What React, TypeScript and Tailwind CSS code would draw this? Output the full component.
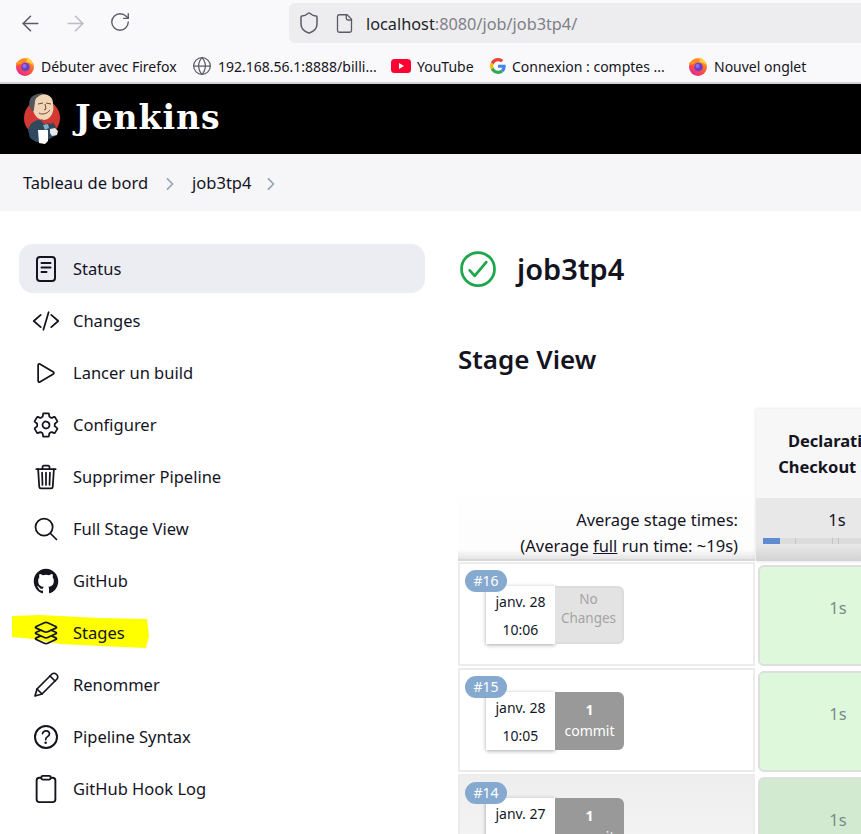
import React from "react";
import {
  IoCodeSlashOutline, IoPlayOutline, IoSettingsOutline, IoTrashOutline,
  IoSearchOutline, IoLogoGithub, IoLayersOutline, IoHelpCircleOutline,
  IoClipboardOutline, IoCheckmarkCircleOutline, IoChevronForward,
} from "react-icons/io5";
import { LuArrowLeft, LuArrowRight, LuRotateCw, LuShield, LuFile, LuGlobe } from "react-icons/lu";

const Firefox = ({ id }: { id: string }) => (
  <svg width="20" height="20" viewBox="0 0 20 20" className="shrink-0">
    <defs>
      <linearGradient id={id} x1="0.8" y1="0" x2="0.2" y2="1">
        <stop offset="0" stopColor="#ffb321" />
        <stop offset="0.5" stopColor="#ff5a36" />
        <stop offset="1" stopColor="#e3209a" />
      </linearGradient>
    </defs>
    <circle cx="10" cy="11" r="9" fill={`url(#${id})`} />
    <path d="M12 1c3 2 5 4 6 8-2-2-5-3-7-3 1-1 2-3 1-5z" fill="#ffd33d" />
    <path d="M1 7c2-2 5-3 7-2l-2 3-5 1z" fill="#ff9a1f" />
    <circle cx="10.5" cy="11" r="4.3" fill="#6a3fc9" />
    <circle cx="9.5" cy="10" r="2" fill="#9a6bea" />
  </svg>
);

const Google = () => (
  <svg width="16" height="16" viewBox="0 0 48 48" className="shrink-0">
    <path fill="#EA4335" d="M24 9.5c3.5 0 6.7 1.2 9.2 3.6l6.9-6.9C35.9 2.4 30.5 0 24 0 14.6 0 6.5 5.4 2.6 13.2l8 6.2C12.5 13.7 17.8 9.5 24 9.5z" />
    <path fill="#4285F4" d="M47 24.5c0-1.6-.1-3.1-.4-4.5H24v9h12.9c-.6 3-2.2 5.5-4.8 7.2l7.7 6C44.4 37.900 47 31.800 47 24.500z" />
    <path fill="#FBBC05" d="M10.600 28.600A14.500 14.500 0 0 1 10.600 19.400l-8-6.200a24 24 0 0 0 0 21.600z" />
    <path fill="#34A853" d="M24 48c6.500 0 11.900-2.100 15.800-5.800l-7.700-6c-2.100 1.400-4.900 2.300-8.100 2.300-6.200 0-11.500-4.200-13.400-9.900l-8 6.200C6.500 42.600 14.600 48 24 48z" />
  </svg>
);

const Youtube = () => (
  <svg width="20" height="14" viewBox="0 0 20 14" className="shrink-0">
    <rect width="20" height="14" rx="3.500" fill="#ff0033" />
    <path d="M8 4l5 3-5 3z" fill="#fff" />
  </svg>
);

const Mascot = () => (
  <svg width="38" height="52" viewBox="0 0 38 52" className="shrink-0">
    <circle cx="18" cy="25" r="18" fill="#d33833" />
    <path d="M4 37c1-5 5-9 10-10l10 1c4 0 7 3 8 7l1 7-6 3-7 4H12l-6-4z" fill="#2f4a5e" />
    <path d="M7 10C7 4 12 1 18 1c6 0 11 3 11 9 0 3 1 5 0 8-1 5-5 9-9 9-5 0-8-3-10-7-1-3-3-6-3-10z" fill="#f0d6b7" />
    <path d="M7 17C4 12 5 5 9 3c3-2 8-3 11-2-4 1-8 3-9 7 0 3-1 6-1 9-1 2-2 1-3 0z" fill="#54585c" />
    <path d="M14 11l5-1M22 10l5 1M15 20c3 2 8 1 11-3M21 11l1 5-2 1" stroke="#6b4a34" strokeWidth="1" fill="none" />
    <path d="M17 26l5 2 6-3 0 6-5-1-1 2-4-3z" fill="#d33833" />
    <path d="M19 32l5-1 1 4-4 2z" fill="#81b0c4" />
    <path d="M14 37h10v11l-3 3-6-1z" fill="#fff" />
    <path d="M26 36l5-1 3 3-1 4-5 1-2-3z" fill="#e8e8e8" />
  </svg>
);

const StatusIcon = ({ size, className }: { size: number; className?: string }) => (
  <svg width={size} height={size} viewBox="0 0 28 28" fill="none" stroke="currentColor" strokeWidth="2" strokeLinecap="round" className={className}>
    <rect x="5" y="2" width="18" height="24" rx="3" />
    <path d="M9.500 8h9M9.500 12.500h9M9.500 17h5" />
  </svg>
);

const PencilIcon = ({ size, className }: { size: number; className?: string }) => (
  <svg width={size} height={size} viewBox="0 0 28 28" fill="none" stroke="currentColor" strokeWidth="1.700" strokeLinejoin="round" strokeLinecap="round" className={className}>
    <path d="M3 25l2-7L20 3c1-1 3-1 4 0l1 1c1 1 1 3 0 4L10 23z" />
    <path d="M5 18l5 5M18 5l5 5" />
  </svg>
);

const items: { label: string; Icon: React.ComponentType<{ size: number; className?: string }>; size?: number; active?: boolean; highlight?: boolean }[] = [
  { label: "Status", Icon: StatusIcon, active: true },
  { label: "Changes", Icon: IoCodeSlashOutline },
  { label: "Lancer un build", Icon: IoPlayOutline },
  { label: "Configurer", Icon: IoSettingsOutline },
  { label: "Supprimer Pipeline", Icon: IoTrashOutline },
  { label: "Full Stage View", Icon: IoSearchOutline },
  { label: "GitHub", Icon: IoLogoGithub },
  { label: "Stages", Icon: IoLayersOutline, highlight: true },
  { label: "Renommer", Icon: PencilIcon },
  { label: "Pipeline Syntax", Icon: IoHelpCircleOutline, size: 32 },
  { label: "GitHub Hook Log", Icon: IoClipboardOutline, size: 30 },
];

const Bookmark = ({ icon, label, className }: { icon: React.ReactNode; label: string; className: string }) => (
  <div className={`flex items-center gap-[6px] ${className}`}>
    {icon}
    <span className="whitespace-nowrap">{label}</span>
  </div>
);

const rows = [
  { n: "#16", date: "janv. 28", time: "10:06", none: true },
  { n: "#15", date: "janv. 28", time: "10:05" },
  { n: "#14", date: "janv. 27", time: "10:04", alt: true },
];

function Row({ r }: { r: (typeof rows)[number] }) {
  return (
    <div className="flex h-[106px] shrink-0">
      <div className={`relative w-[297px] h-[104px] mt-px border-2 border-[#ececec] ${r.alt ? "bg-gradient-to-b from-[#eeeeee] to-[#f6f6f6]" : "bg-white"}`}>
        <div className="absolute left-[5px] top-[6px] z-10 w-[42px] h-[22px] rounded-full bg-[#86a9d0] text-white text-[14px] leading-[22px] text-center">{r.n}</div>
        <div className="absolute left-[26px] top-[22px] flex h-[58px]">
          <div className="w-[69px] bg-white shadow-[0_1px_4px_rgba(0,0,0,0.35)] text-[14px] leading-[28px] text-center text-[#111827] flex flex-col pt-[2px]">
            <span>{r.date}</span>
            <span>{r.time}</span>
          </div>
          {r.none ? (
            <div className="w-[69px] rounded-r-[6px] bg-[#e3e3e3] border-r-2 border-b-2 border-t-2 border-[#dcdcdc] text-[#a3a3a3] text-[13.5px] leading-[19px] text-center pt-[2px]">No<br />Changes</div>
          ) : (
            <div className="w-[69px] rounded-r-[6px] bg-[#999999] text-white text-[14px] leading-[21px] text-center pt-[7px]"><b>1</b><br />commit</div>
          )}
        </div>
      </div>
      <div className="w-[1px]" />
      <div className={`w-[160px] h-[101px] mt-[4px] ml-[2px] pb-[15px] rounded-[6px] border-2 border-[#dedede] flex items-center justify-center text-[16.5px] text-[#7c8b8b] ${r.alt ? "bg-[#d2ebd0]" : "bg-[#def8dc]"}`}>1s</div>
    </div>
  );
}

export default function App() {
  return (
    <div className="w-[861px] h-[834px] overflow-hidden bg-white text-[#14141f] font-['Noto_Sans','Open_Sans',sans-serif] flex flex-col">
      {/* Browser chrome */}
      <div className="h-[84px] shrink-0 bg-[#f9f9fb] border-b-2 border-[#d4d4d8] flex flex-col">
        <div className="flex h-[46px] pt-[3px]">
          <div className="w-[289px] flex items-center gap-[20px] pl-[18px] pb-[3px]">
            <LuArrowLeft size={25} strokeWidth={1.5} className="text-[#5b5b66]" />
            <LuArrowRight size={25} strokeWidth={1.5} className="text-[#bcbcc2]" />
            <LuRotateCw size={22} strokeWidth={1.500} className="text-[#5b5b66] ml-[1px] mb-[3px]" />
          </div>
          <div className="flex-1 h-[40px] bg-[#ededf0] rounded-l-[6px] flex items-center pl-[8px]">
            <LuShield size={24} strokeWidth={1.5} className="text-[#5b5b66]" />
            <LuFile size={21} strokeWidth={1.5} className="text-[#5b5b66] ml-[13px]" />
            <span className="ml-[11px] mt-[3px] text-[16.3px] whitespace-nowrap text-[#1f1f26]">localhost<span className="text-[#7f7f87]">:8080/job/job3tp4/</span></span>
          </div>
        </div>
        <div className="flex items-center h-[34px] text-[14px] text-[#15141a] pt-[6px]">
          <Bookmark className="ml-[15px] w-[177px]" icon={<Firefox id="ff1" />} label="Débuter avec Firefox" />
          <Bookmark className="w-[199px] gap-[5px]" icon={<LuGlobe size={20} strokeWidth={1.5} className="text-[#5b5b66]" />} label="192.168.56.1:8888/billi..." />
          <Bookmark className="w-[99px]" icon={<Youtube />} label="YouTube" />
          <Bookmark className="w-[198px]" icon={<Google />} label="Connexion : comptes ..." />
          <Bookmark className="" icon={<Firefox id="ff2" />} label="Nouvel onglet" />
        </div>
      </div>

      {/* Jenkins header */}
      <div className="h-[70px] shrink-0 bg-black flex items-center pl-[24px] gap-[13px]">
        <Mascot />
        <span className="text-white font-bold text-[33px] tracking-[1px] font-['DejaVu_Serif',serif] leading-none pb-[4px]">Jenkins</span>
      </div>

      {/* Breadcrumb */}
      <div className="h-[57px] shrink-0 bg-[#f6f6f9] flex items-center pl-[23px] pt-[2px] text-[16.5px] text-[#14141f]">
        <span>Tableau de bord</span>
        <IoChevronForward size={18} className="mx-[13px] text-[#94a3b8]" />
        <span>job3tp4</span>
        <IoChevronForward size={18} className="ml-[11px] text-[#94a3b8]" />
      </div>

      {/* Body */}
      <div className="flex-1 flex pt-[33px] pl-[19px] min-h-0">
        <nav className="w-[406px] shrink-0 flex flex-col">
          {items.map(({ label, Icon, size, active, highlight }) => (
            <div key={label} className={`relative flex items-center h-[49px] mb-[3px] shrink-0 rounded-[14px] text-[16.5px] ${active ? "bg-[#ecedf2]" : ""}`}>
              {highlight && (
                <svg width="140" height="36" viewBox="12 616 140 36" className="absolute left-[-7px] top-[7px]">
                  <polygon points="12,617 40,616 100,619 147,620 149,637 146,649 100,647 60,645 33,640 12,638" fill="#ffff00" />
                </svg>
              )}
              <div className="relative w-[54px] shrink-0 flex items-center justify-center text-[#14141f]">
                <Icon size={size ?? 28} className="shrink-0" />
              </div>
              <span className="relative whitespace-nowrap pt-[1px]">{label}</span>
            </div>
          ))}
        </nav>

        <main className="flex-1 min-w-0 pl-[33px]">
          <div className="flex items-center h-[50px] gap-[17px]">
            <IoCheckmarkCircleOutline size={44} className="text-[#1ea64b] ml-[-2px]" />
            <h1 className="text-[29px] font-semibold text-[#14141f]">job3tp4</h1>
          </div>
          <h2 className="mt-[47px] text-[26px] font-semibold leading-[36px] text-[#14141f]">Stage View</h2>
          <div className="mt-[32px] flex flex-col w-[470px]">
            <div className="flex h-[152px] shrink-0">
              <div className="w-[297px] h-[152px] flex flex-col justify-end">
                <div className="h-[64px] bg-gradient-to-b from-[#fefefe] via-[#fdfdfd] via-85% to-[#e4e4e4] border-b-2 border-[#d6d6d6] text-right pr-[17px] text-[16.5px] leading-[26px] text-[#14141f] pt-[10px]">
                  <div>Average stage times:</div>
                  <div>(Average <u>full</u> run time: ~19s)</div>
                </div>
              </div>
              <div className="w-[162px] ml-[1px] flex flex-col shadow-[0_0_3px_rgba(0,0,0,0.15)]">
                <div className="h-[89px] bg-[#f7f7f7] text-center font-bold text-[16.5px] leading-[26px] text-[#14141f] pt-[19px]">Declarative:<br />Checkout SCM</div>
                <div className="h-[63px] bg-gradient-to-b from-[#e8e8e8] via-[#e8e8e8] via-75% to-[#d2d2d2] pt-[10px] text-center text-[16.5px] text-[#14141f] relative">
                  1s
                  <div className="absolute left-[7px] right-[7px] top-[40px] h-[6px] bg-[#dcdcdc] flex">
                    <div className="w-[17px] bg-[#5f8bd0]" />
                    <div className="ml-[15px] w-px bg-[#c4c4c4]" />
                    <div className="ml-[36px] w-px bg-[#c4c4c4]" />
                    <div className="ml-[5px] w-px bg-[#c4c4c4]" />
                  </div>
                </div>
              </div>
            </div>
            {rows.map((r) => <Row key={r.n} r={r} />)}
          </div>
        </main>
      </div>
    </div>
  );
}
